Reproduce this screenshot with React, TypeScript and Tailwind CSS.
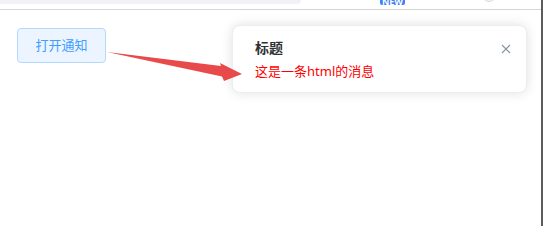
export default function App() {
  return (
    <div
      className="relative w-[543px] h-[226px] overflow-hidden bg-white border-r-2 border-[#5c5c5c]"
      style={{ fontFamily: '"Noto Sans", "Noto Sans CJK SC", sans-serif' }}
    >
      {/* top strip, cut off by the screenshot */}
      <div className="flex items-start h-[10px] border-b border-[#d6d6d6]">
        <div className="w-[301px] h-[4px] rounded-br-[8px] bg-[#f0f2f5]" />
        <div className="ml-[79px] w-[25px] h-[5px] rounded-b-[2px] bg-[#3d7ff5] overflow-hidden flex items-end justify-center">
          <span className="text-[9px] leading-[9px] font-bold text-white -mb-[1px]">NEW</span>
        </div>
        <div className="ml-[77px] -mt-[12px] w-[14px] h-[14px] rounded-full border border-[#d9d9d9] bg-[#f5f5f5]" />
      </div>

      <div className="flex items-start">
        <button className="ml-[17px] mt-[18px] w-[89px] h-[35px] rounded-[4px] border border-[#b3d8ff] bg-[#ecf5ff] text-[13px] text-[#409eff]">
          打开通知
        </button>

        <div className="ml-auto mr-[14px] mt-[15px] w-[295px] h-[68px] rounded-[8px] border border-[#ebeef5] bg-white shadow-[0_0_12px_rgba(0,0,0,0.12)] pl-[22px] pr-[15px] pt-[12px]">
          <div className="flex items-center justify-between">
            <span className="text-[14px] leading-[20px] font-bold text-[#303133]">标题</span>
            <svg width="10" height="10" viewBox="0 0 10 10" className="mt-[1px]">
              <path d="M1 1L9 9M9 1L1 9" stroke="#8a94a6" strokeWidth="1.1" />
            </svg>
          </div>
          <p className="mt-[3px] text-[13px] leading-[20px] text-[#ff0000]">这是一条html的消息</p>
        </div>
      </div>

      {/* red annotation arrow */}
      <svg className="absolute left-0 top-0 pointer-events-none" width="543" height="226">
        <polygon points="107,52 221,66 220,63 242,74 224,81 222,76.5" fill="#e84a4b" />
      </svg>
    </div>
  );
}
